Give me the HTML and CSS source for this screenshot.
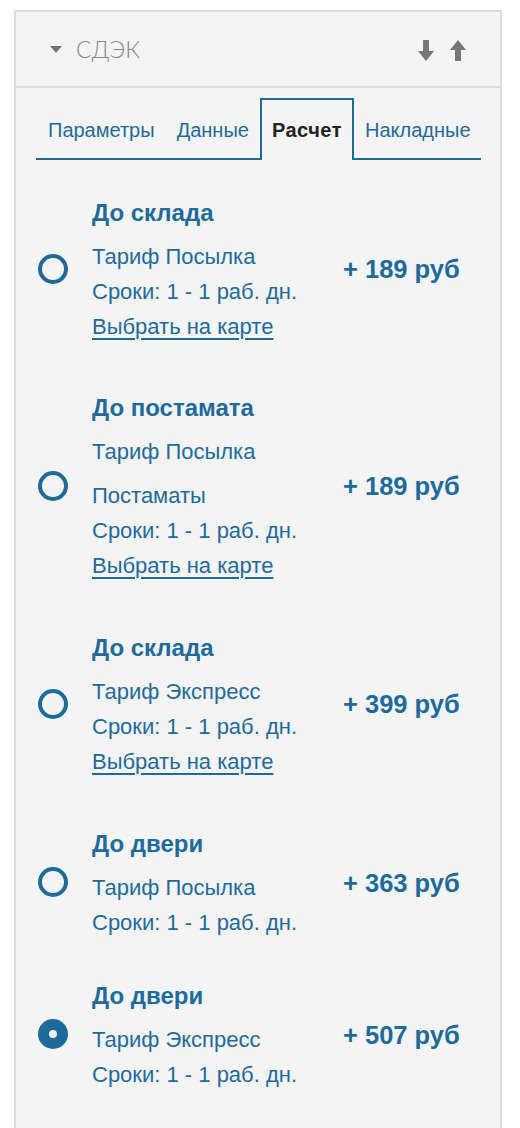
FILE: index.html
```html
<!DOCTYPE html>
<html lang="ru">
<head>
<meta charset="utf-8">
<link rel="stylesheet" href="styles.css">
</head>
<body>
<div class="panel">
  <div class="panel-head">
    <div class="panel-title">
      <span class="caret"></span>
      <span class="title-text">СДЭК</span>
    </div>
    <div class="sort">
      <svg class="arrow" width="16" height="21" viewBox="0 0 16 21"><path d="M5 0h6v11h5l-8 10-8-10h5z" fill="#777"/></svg>
      <svg class="arrow" width="16" height="21" viewBox="0 0 16 21"><path d="M5 21h6V10h5L8 0 0 10h5z" fill="#777"/></svg>
    </div>
  </div>
  <div class="panel-body">
    <div class="tabs">
      <div class="tab">Параметры</div>
      <div class="tab">Данные</div>
      <div class="tab active">Расчет</div>
      <div class="tab">Накладные</div>
    </div>
    <div class="rates">
      <div class="rate">
        <span class="radio"></span>
        <div class="info">
          <div class="rate-title">До склада</div>
          <div class="line">Тариф Посылка</div>
          <div class="line">Сроки: 1 - 1 раб. дн.</div>
          <a class="line map-link" href="#">Выбрать на карте</a>
        </div>
        <div class="price">+ 189 руб</div>
      </div>
      <div class="rate">
        <span class="radio"></span>
        <div class="info">
          <div class="rate-title">До постамата</div>
          <div class="line">Тариф Посылка</div>
          <div class="line extra">Постаматы</div>
          <div class="line">Сроки: 1 - 1 раб. дн.</div>
          <a class="line map-link" href="#">Выбрать на карте</a>
        </div>
        <div class="price">+ 189 руб</div>
      </div>
      <div class="rate">
        <span class="radio"></span>
        <div class="info">
          <div class="rate-title">До склада</div>
          <div class="line">Тариф Экспресс</div>
          <div class="line">Сроки: 1 - 1 раб. дн.</div>
          <a class="line map-link" href="#">Выбрать на карте</a>
        </div>
        <div class="price">+ 399 руб</div>
      </div>
      <div class="rate">
        <span class="radio"></span>
        <div class="info">
          <div class="rate-title">До двери</div>
          <div class="line">Тариф Посылка</div>
          <div class="line">Сроки: 1 - 1 раб. дн.</div>
        </div>
        <div class="price">+ 363 руб</div>
      </div>
      <div class="rate">
        <span class="radio checked"></span>
        <div class="info">
          <div class="rate-title">До двери</div>
          <div class="line">Тариф Экспресс</div>
          <div class="line">Сроки: 1 - 1 раб. дн.</div>
        </div>
        <div class="price">+ 507 руб</div>
      </div>
    </div>
  </div>
</div>
</body>
</html>
```

FILE: styles.css
```css
html, body {
  margin: 0;
  padding: 0;
  background: #fff;
}
body {
  font-family: "Liberation Sans", Arial, sans-serif;
  color: #1e6b9b;
}
.panel {
  margin: 10px 0 0 14px;
  width: 488px;
  height: 1130px;
  box-sizing: border-box;
  border: 2px solid #dcdcdc;
  border-bottom: none;
  background: #f4f4f4;
}
.panel-head {
  height: 74px;
  border-bottom: 2px solid #dcdcdc;
  display: flex;
  align-items: center;
  justify-content: space-between;
  padding: 0 34px 0 34px;
}
.panel-title {
  display: flex;
  align-items: center;
  gap: 14px;
}
.caret {
  width: 0;
  height: 0;
  border-left: 6.5px solid transparent;
  border-right: 6.5px solid transparent;
  border-top: 7px solid #777;
}
.title-text {
  font-family: Lato, "Open Sans", sans-serif;
  font-weight: 300;
  font-size: 23px;
  color: #888;
  letter-spacing: 0.2px;
}
.sort {
  display: flex;
  gap: 16px;
  align-items: center;
  padding-top: 2px;
}
.arrow {
  display: block;
}
.panel-body {
  padding: 10px 19px 0 21px;
}
.tabs {
  display: flex;
  border-bottom: 2px solid #1e6b9b;
  height: 60px;
  margin-left: -1px;
  padding-left: 1px;
}
.tab {
  padding: 0 9px;
  border: 2px solid transparent;
  border-bottom: none;
  font-size: 20px;
  line-height: 60px;
  color: #1e6b9b;
  white-space: nowrap;
}
.tab.active {
  padding: 0 10px;
  border-color: #1e6b9b;
  background: #f4f4f4;
  margin-bottom: -2px;
  height: 60px;
  color: #222;
  font-weight: bold;
  letter-spacing: 0.5px;
}
.rates {
  padding: 35px 0 0 1px;
  display: flex;
  flex-direction: column;
  gap: 46px;
}
.rate {
  display: grid;
  grid-template-columns: 30px 227px auto;
  column-gap: 24px;
  align-items: center;
}
.radio {
  width: 30px;
  height: 30px;
  box-sizing: border-box;
  border: 4px solid #1e6b9b;
  border-radius: 50%;
  margin-top: -2px;
}
.radio.checked {
  border-width: 11px;
}
.info {
  display: flex;
  flex-direction: column;
}
.rate-title {
  font-size: 24px;
  font-weight: bold;
  line-height: 35px;
  margin-bottom: 9px;
}
.line {
  font-size: 22px;
  line-height: 35px;
  color: #1e6b9b;
}
.extra {
  margin-top: 9px;
}
.map-link {
  align-self: flex-start;
  text-decoration: underline;
  text-decoration-thickness: 2px;
  text-underline-offset: 4px;
}
.price {
  font-size: 25.5px;
  font-weight: bold;
  white-space: nowrap;
}
.rate:nth-child(3) {
  margin-top: 1px;
}
.rate:nth-child(4) {
  margin-top: 1px;
}
.rate:nth-child(5) {
  margin-top: -8px;
}
```
